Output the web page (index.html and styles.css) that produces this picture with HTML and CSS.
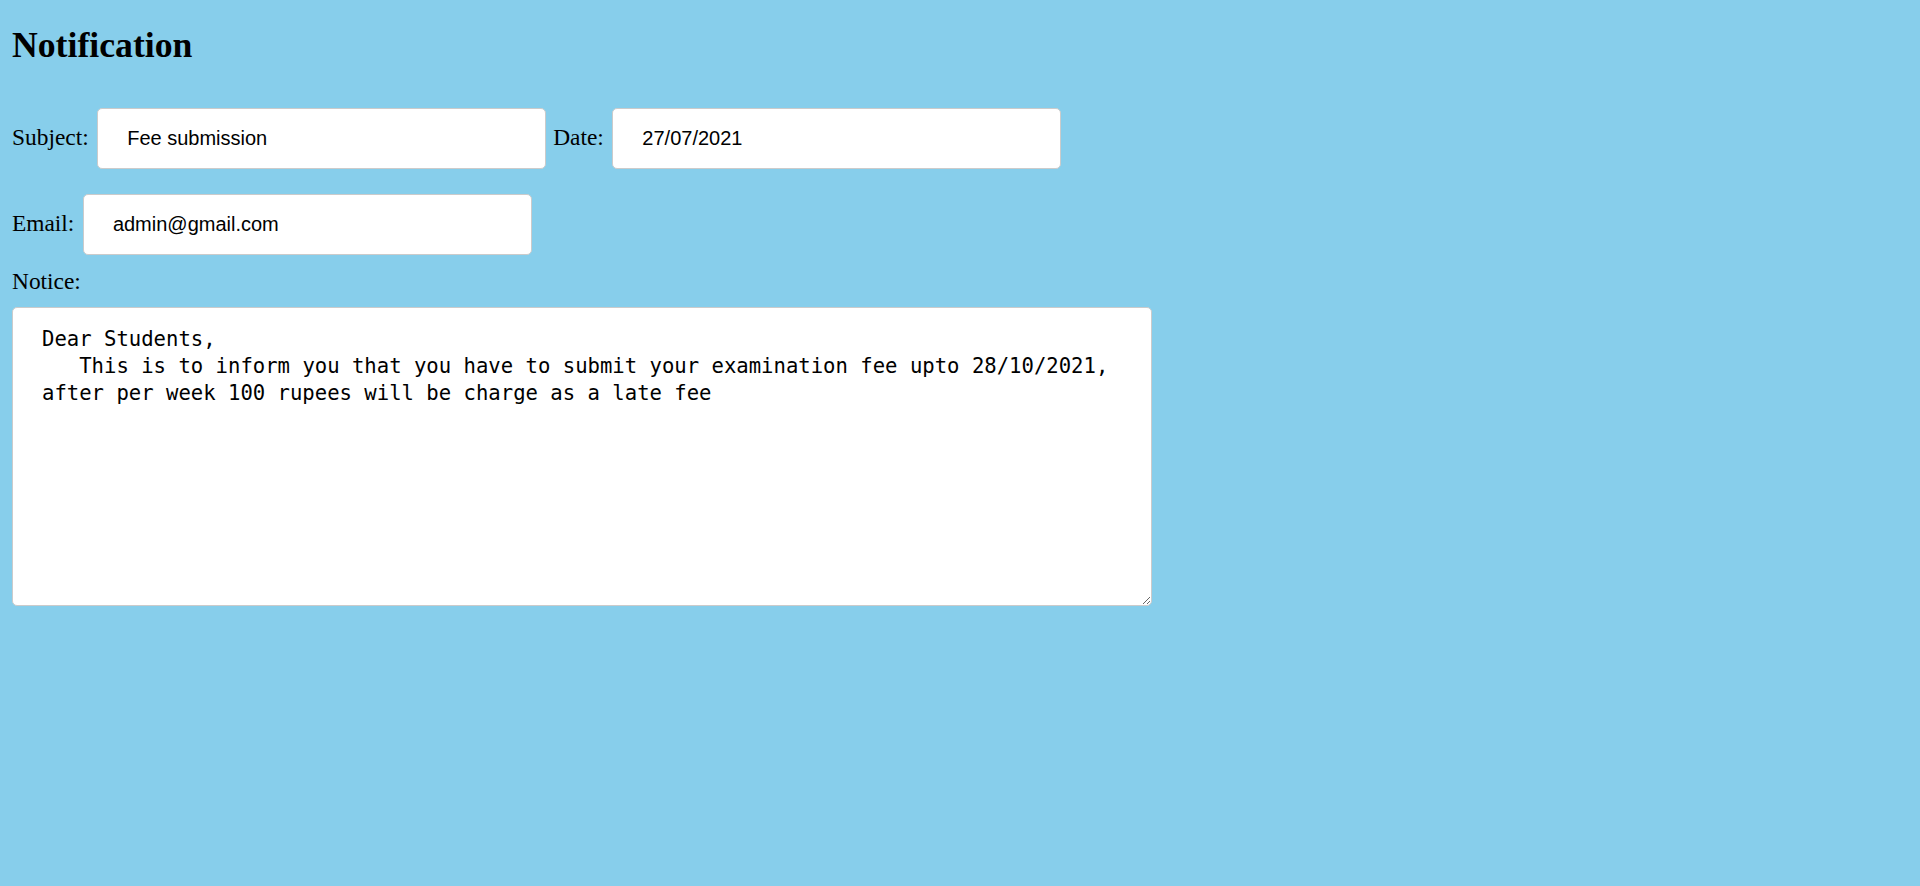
FILE: index.html
```html
<!DOCTYPE html>
<html lang="en">
<head>
<meta charset="utf-8">
<title>Notification</title>
<link rel="stylesheet" href="styles.css">
</head>
<body>
<h1 class="title">Notification</h1>
<form class="form">
  <div class="row row-first">
    <label class="label label-before" for="subject">Subject:</label>
    <input class="field" id="subject" type="text" value="Fee submission">
    <label class="label label-before label-after" for="date">Date:</label>
    <input class="field" id="date" type="text" value="27/07/2021">
  </div>
  <div class="row row-second">
    <label class="label label-before" for="email">Email:</label>
    <input class="field" id="email" type="text" value="admin@gmail.com">
  </div>
  <label class="label label-block" for="notice">Notice:</label>
  <textarea class="notice" id="notice">Dear Students,
   This is to inform you that you have to submit your examination fee upto 28/10/2021,
after per week 100 rupees will be charge as a late fee</textarea>
</form>
</body>
</html>
```

FILE: styles.css
```css
html, body {
  margin: 0;
}

body {
  background: #87ceeb;
  padding: 25px 12px;
  font-family: "Liberation Serif", "Times New Roman", serif;
  color: #000;
}

.title {
  margin: 0;
  font-size: 35.7px;
  line-height: 40px;
  font-weight: 700;
}

.form {
  display: flex;
  flex-direction: column;
  align-items: flex-start;
}

.row {
  display: flex;
  align-items: baseline;
}

.row-first {
  margin-top: 43px;
}

.row-second {
  margin-top: 25px;
}

.label {
  font-size: 23.4px;
  line-height: 26px;
}

.label-before {
  margin-right: 8.5px;
}

.label-after {
  margin-left: 7px;
}

.label-block {
  margin-top: 12.5px;
}

.field {
  box-sizing: border-box;
  width: 449px;
  height: 61px;
  margin: 0;
  padding: 0 29px;
  border: 1px solid #cbcbcb;
  border-radius: 5px;
  background: #fff;
  font-family: "Liberation Sans", Arial, sans-serif;
  font-size: 20px;
  color: #000;
  outline: none;
}

.notice {
  box-sizing: border-box;
  display: block;
  width: 1140px;
  height: 299px;
  margin: 13px 0 0 0;
  padding: 18.7px 29px;
  border: 1px solid #cbcbcb;
  border-radius: 5px;
  background: #fff;
  font-family: "DejaVu Sans Mono", "Liberation Mono", monospace;
  font-size: 20.6px;
  line-height: 26.8px;
  color: #000;
  white-space: pre-wrap;
  outline: none;
}
```
